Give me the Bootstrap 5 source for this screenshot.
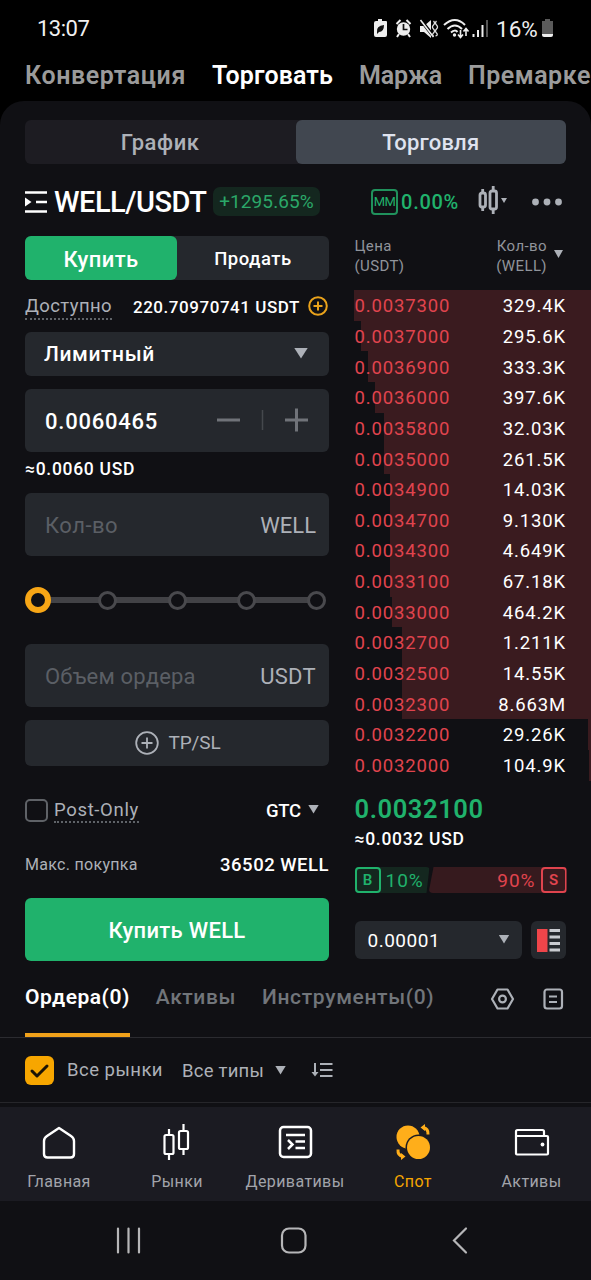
<!DOCTYPE html>
<html lang="ru">
<head>
  <meta charset="UTF-8"/>
  <meta name="viewport" content="width=device-width, initial-scale=1.0"/>
  <title>WELL/USDT</title>
  <link href="https://cdn.jsdelivr.net/npm/bootstrap@5.3.0/dist/css/bootstrap.min.css" rel="stylesheet"/>
  <style>
    body {
      background: #000;
      color: #fff;
      font-family: Roboto, "Noto Sans", sans-serif;
      font-size: 18.5px;
      line-height: 1.2;
      overflow: hidden;
    }
    svg { display: block; flex: none; }
    .app { width: 591px; height: 1280px; overflow: hidden; white-space: nowrap; }
    .c-grey { color: #adb1b8; }
    .c-mute { color: #71757a; }
    .c-dark { color: #5b5f65; }
    .c-green { color: #20b26c; }
    .c-red { color: #e0444e; }
    .dotted { border-bottom: 2px dotted #5f6368; }
    .caret { width: 12px; height: 9px; background: #adb1b8; clip-path: polygon(0 0, 100% 0, 50% 100%); flex: none; }

    /* top bars */
    .statusbar { height: 57px; padding: 2px 37px 0; font-size: 22px; letter-spacing: -.5px; color: #f0f0f0; }
    .top-tabs { height: 44px; padding: 0 0 6px 25px; font-size: 25px; font-weight: 600; color: #9b9b9b; gap: 26px; }
    .panel { height: 1006px; background: #101014; border-radius: 24px 24px 0 0; }
    .switch { height: 44px; margin: 0 25px; background: #1d1c22; border-radius: 6px; font-size: 22px; font-weight: 500; }
    .switch .on { background: #414750; border-radius: 6px; color: #dfe3ef; }
    .switch .w-50 { padding-top: 3px; }
    .pair-row { height: 72px; padding: 3px 25px 0; }
    .pair-name { font-size: 29px; font-weight: 500; letter-spacing: -.5px; margin-left: 7px; padding-top: 2px; width: 159px; }
    .pct { width: 107px; height: 29px; padding-top: 2px; border-radius: 7px; background: #14271f; color: #2ba869; font-size: 19px; letter-spacing: .1px; }
    .mm { width: 27px; height: 26px; border: 2px solid #20915c; border-radius: 4px; font-size: 13px; letter-spacing: -.4px; }

    /* order form */
    .form-side { width: 304px; margin-left: 25px; }
    .field { background: #25282d; border-radius: 6px; }
    .btn-buy, .btn-buy:hover { background: #20b26c; color: #fff; border-radius: 6px; }
    .h63 { height: 63px; font-size: 22px; padding: 3px 13px 0 20px; }
    .track { height: 26px; margin: 31px 0; position: relative; }
    .track::before { content: ""; position: absolute; left: 20px; right: 12px; top: 10px; height: 6px; background: #424246; }
    .track i { position: relative; width: 19px; height: 19px; border: 3px solid #49494d; border-radius: 50%; background: #101014; }
    .track i:first-child { width: 26px; height: 26px; border: 6px solid #f7a616; }
    .box { width: 23px; height: 23px; border: 2px solid #5f6267; border-radius: 5px; }

    /* order book */
    .book-side { width: 236.500px; }
    .book-head { height: 54px; font-size: 15px; line-height: 20px; letter-spacing: .4px; color: #90949b; padding-right: 28px; }
    .book-row { height: 30.67px; padding: 2px 25px 0 0; position: relative; letter-spacing: .85px; }
    .book-row div { position: absolute; top: 0; bottom: 0; right: 0; background: #3a1b1f; }
    .book-row span { position: relative; }
    .power { width: 212px; height: 26px; font-size: 19px; }
    .power-buy { width: 75px; background: #14271f; clip-path: polygon(0 0, 100% 0, 72px 100%, 0 100%); border-radius: 4px; }
    .power-sell { width: 138px; margin-left: -1px; background: #361a1e; clip-path: polygon(5px 0, 100% 0, 100% 100%, 0 100%); border-radius: 4px; }
    .tag { width: 26px; height: 26px; border: 2px solid; border-radius: 4px; font-size: 15px; font-weight: 600; }

    /* orders */
    .order-tabs { height: 77px; border-bottom: 1px solid #2b2b30; padding: 0 25px; font-size: 21px; font-weight: 500; letter-spacing: .6px; }
    .order-tabs .on { font-weight: 600; letter-spacing: .5px; border-bottom: 4px solid #f0a11a; }
    .order-tabs .tab-text { height: 76px; padding-top: 24px; }
    .filters { height: 65px; border-bottom: 1px solid #26262a; padding: 0 25px; }
    .tick { width: 29px; height: 29px; border-radius: 6px; background: #f7a600; }

    .bottom-nav { height: 94px; background: #1b1b22; font-size: 16px; letter-spacing: .4px; color: #a2a4ab; }
    .bottom-nav .ico { height: 36px; margin: 17px auto 12px; }
    .sysnav { height: 79px; background: #101014; }
  </style>
</head>
<body>
<div class="app">
  <!-- Phone status bar -->
  <div class="statusbar d-flex align-items-center">
    <span class="me-auto">13:07</span>
    <svg width="181" height="24" viewBox="0 0 181 24" fill="#eee" style="margin-top:-4px">
      <path d="M4 3h4v2h4q1 0 1 1v13q0 2-2 2H2q-2 0-2-2V7q0-2 2-2h2z" transform="translate(1 0)"/>
      <path d="M4 16q-1-6 7-7 0 7-5 7l-2 2z" fill="#111"/>
      <circle cx="30.500" cy="13" r="6.700"/><path d="M23.500 8l4-4M37.500 8l-4-4M26 18l-2 3M35 18l2 3" stroke="#eee" stroke-width="2"/>
      <path d="M30.500 8v5.500h4" fill="none" stroke="#111" stroke-width="1.700"/>
      <path d="M47 10h4l7-6v18l-7-6h-4z"/><path d="M47 3l14 18" stroke="#000" stroke-width="3.500"/><path d="M47.500 4l13 17" stroke="#eee" stroke-width="1.600"/>
      <path d="M60.500 5q2 2 0 4t0 4 0 4 0 3M63.500 5q-2 2 0 4t0 4 0 4-1 3" fill="none" stroke="#ddd" stroke-width="1.300"/>
      <g fill="none" stroke="#eee" stroke-width="2"><path d="M71 9q11-10 21 0M74.500 13q7.500-7 14.500 0M78 16.500q4-3.500 6.500-.5"/></g>
      <circle cx="81.500" cy="19" r="1.700"/>
      <path d="M87.500 14v7M85 18.500l2.500 3 2.500-3M93 20v-7M90.500 15.500l2.500-3 2.500 3" fill="none" stroke="#eee" stroke-width="1.600"/>
      <path d="M99.500 18h2v3h-2zM104 14h2v7h-2zM108.500 9h2v12h-2z"/><path d="M113 4h2v17h-2z" fill="#555"/>
      <text x="123" y="20.500" font-size="22.500" letter-spacing="0">16%</text>
      <path d="M172 3h5v2h3v14h-11V5h3z" fill="#5a5a5a"/><path d="M169 18h11v1q0 2-2 2h-7q-2 0-2-2z"/>
    </svg>
  </div>

  <div class="top-tabs d-flex align-items-center">
    <span style="letter-spacing:.62px">Конвертация</span>
    <span class="text-white" style="letter-spacing:.12px">Торговать</span>
    <span style="letter-spacing:-.1px">Маржа</span>
    <span style="letter-spacing:.5px">Премарке</span>
  </div>

  <div class="panel">
    <div style="height:19px"></div>
    <div class="switch d-flex">
      <div class="w-50 d-flex align-items-center justify-content-center c-grey" style="letter-spacing:.6px">График</div>
      <div class="on w-50 d-flex align-items-center justify-content-center" style="letter-spacing:.2px">Торговля</div>
    </div>

    <!-- Pair header -->
    <div class="pair-row d-flex align-items-center">
      <svg width="22" height="22" viewBox="0 0 22 22"><path d="M0 1.500h22M11 11h11M0 20.500h22" stroke="#fff" stroke-width="2.600"/><path d="M0 6.500l6.500 4.500-6.500 4.500z" fill="#fff"/></svg>
      <span class="pair-name">WELL/USDT</span>
      <span class="pct d-flex align-items-center justify-content-center">+1295.65%</span>
      <span class="mm c-green d-flex align-items-center justify-content-center ms-auto">MM</span>
      <span class="c-green" style="font-size:20px;font-weight:500;letter-spacing:.7px;margin-left:3px;padding-top:1px">0.00%</span>
      <svg width="30" height="30" viewBox="0 0 30 30" style="margin:-4px 24px 0 19px" fill="none" stroke="#adb1b8" stroke-width="2.800">
        <rect x="2" y="8" width="5.500" height="14" rx="2"/><path d="M4.700 4v4M4.700 22v4"/>
        <rect x="12" y="6" width="6.500" height="18" rx="2"/><path d="M15.200 1v5M15.200 24v5"/>
        <path d="M23 13h6l-3 5z" fill="#adb1b8" stroke="none"/>
      </svg>
      <svg width="34" height="8" viewBox="0 0 34 8" fill="#adb1b8"><circle cx="3.500" cy="4" r="3.400"/><circle cx="15" cy="4" r="3.400"/><circle cx="26.500" cy="4" r="3.400"/></svg>
    </div>

    <div class="d-flex" style="height:725px">
      <!-- Order form -->
      <div class="form-side">
        <div class="field d-flex" style="height:44px">
          <div class="btn-buy w-50 d-flex align-items-center justify-content-center" style="font-size:22px;font-weight:500;letter-spacing:.38px;padding-top:4px">Купить</div>
          <div class="w-50 d-flex align-items-center justify-content-center" style="font-size:18.5px;font-weight:500;letter-spacing:.5px;padding-top:2px">Продать</div>
        </div>
        <div class="d-flex align-items-center justify-content-between" style="height:52px;padding-top:2px">
          <span class="dotted c-grey" style="letter-spacing:.4px;margin-top:1px">Доступно</span>
          <span class="d-flex align-items-center" style="font-size:17px;font-weight:500;letter-spacing:.55px;gap:7px">220.70970741 USDT
            <svg width="22" height="22" viewBox="0 0 22 22" fill="none" stroke="#e9a21b" stroke-width="2" style="margin-top:-2px"><circle cx="11" cy="11" r="8.800"/><path d="M6.500 11h9M11 6.500v9"/></svg>
          </span>
        </div>
        <div class="field d-flex align-items-center justify-content-between" style="height:44px;padding:1px 21px 0 19px;font-size:21px;font-weight:500;letter-spacing:.6px">Лимитный
          <span class="caret" style="width:14px;height:11px;margin-top:-3px"></span>
        </div>
        <div class="field h63 d-flex align-items-center" style="margin-top:13px">
          <span class="me-auto" style="font-weight:500;letter-spacing:.76px">0.0060465</span>
          <svg width="92" height="26" viewBox="0 0 92 26" stroke="#707379" stroke-width="3" style="margin:-4px 7px 0 0"><path d="M0 13h23M68 13h23M79.500 1.500v23"/><path d="M45.500 3v20" stroke="#45484d" stroke-width="1.500"/></svg>
        </div>
        <div class="d-flex align-items-center" style="height:41px;padding-bottom:7px;font-size:17.5px;font-weight:500;letter-spacing:.7px">≈0.0060 USD</div>
        <div class="field h63 d-flex align-items-center justify-content-between">
          <span class="c-dark" style="letter-spacing:.5px">Кол-во</span><span class="c-grey" style="letter-spacing:0">WELL</span>
        </div>
        <div class="track d-flex align-items-center" style="gap:50.8px;padding-right:2px"><i></i><i style="margin-left:-4px"></i><i></i><i></i><i></i></div>
        <div class="field h63 d-flex align-items-center justify-content-between">
          <span class="c-dark" style="letter-spacing:.2px">Объем ордера</span><span class="c-grey" style="letter-spacing:.3px">USDT</span>
        </div>
        <div class="field c-grey d-flex align-items-center justify-content-center" style="height:46px;margin-top:13px;gap:9px;font-size:19px;letter-spacing:-.1px;padding-left:2px">
          <svg width="24" height="24" viewBox="0 0 24 24" fill="none" stroke="#adb1b8" stroke-width="1.800"><circle cx="12" cy="12" r="10.800"/><path d="M6.500 12h11M12 6.500v11"/></svg>TP/SL
        </div>
        <div class="d-flex align-items-center" style="height:88px">
          <span class="box"></span>
          <span class="dotted c-grey" style="margin-left:6px;padding-top:2px;letter-spacing:.66px">Post-Only</span>
          <span class="ms-auto" style="font-weight:500;letter-spacing:-.2px;padding-top:2px">GTC</span>
          <span class="caret" style="margin:-2px 10px 0 7px;width:11px"></span>
        </div>
        <div class="d-flex align-items-center justify-content-between" style="height:44px;padding-bottom:22px">
          <span class="c-grey" style="font-size:16px;letter-spacing:.3px">Макс. покупка</span><span style="font-weight:500;letter-spacing:.5px">36502 WELL</span>
        </div>
        <div class="btn-buy d-flex align-items-center justify-content-center" style="height:63px;font-size:22px;font-weight:500;letter-spacing:.3px;padding-top:3px">Купить WELL</div>
      </div>

      <!-- Order book -->
      <div class="book-side ms-auto">
        <div class="book-head d-flex justify-content-between">
          <div>Цена<br>(USDT)</div>
          <div class="d-flex align-items-start text-end"><span>Кол-во<br>(WELL)</span><span class="caret" style="width:9px;height:8px;margin:14px 0 0 7px"></span></div>
        </div>
        <div id="asks"></div>
        <div class="c-green" style="font-size:25.5px;font-weight:600;letter-spacing:.6px;margin-top:13px">0.0032100</div>
        <div style="font-size:17.5px;font-weight:500;letter-spacing:.7px;margin-top:5px">≈0.0032 USD</div>
        <div class="power d-flex" style="margin-top:17px">
          <div class="power-buy c-green d-flex align-items-center"><span class="tag d-flex align-items-center justify-content-center">B</span><span style="margin-left:5px;padding-top:2px;letter-spacing:1px">10%</span></div>
          <div class="power-sell c-red d-flex align-items-center justify-content-end"><span style="margin-right:5px;padding-top:2px;letter-spacing:1px">90%</span><span class="tag d-flex align-items-center justify-content-center">S</span></div>
        </div>
        <div class="d-flex" style="margin-top:28px;gap:9px">
          <div class="field d-flex align-items-center justify-content-between" style="width:167px;height:38px;padding:2px 12px 0 13px;font-size:19px;letter-spacing:.5px">0.00001<span class="caret" style="margin-top:-4px;width:11px"></span></div>
          <div class="field d-flex align-items-center justify-content-center" style="width:35px;height:38px">
            <svg width="23" height="23" viewBox="0 0 23 23"><path d="M0 0h10.500v23H0z" fill="#ef454a"/><path d="M12.500 1.500H23M12.500 8H23M12.500 14.500H23M12.500 21H23" stroke="#c9cbd0" stroke-width="3"/></svg>
          </div>
        </div>
      </div>
    </div>

    <!-- Orders -->
    <div class="order-tabs d-flex c-mute">
      <div class="tab-text on text-white">Ордера(0)</div>
      <div class="tab-text" style="margin-left:26px">Активы</div>
      <div class="tab-text me-auto" style="margin-left:26px;letter-spacing:.66px">Инструменты(0)</div>
      <svg width="76" height="24" viewBox="0 0 76 24" fill="none" stroke="#adb1b8" stroke-width="2.200" style="margin-top:26px">
        <path d="M7.500 2.500h10l5.500 9.500-5.500 9.500h-10L2 12z" stroke-linejoin="round"/><circle cx="12.500" cy="12" r="3.400"/>
        <rect x="54.500" y="2.500" width="17.500" height="19" rx="2.500"/><path d="M59 9.500h8M59 15h8"/>
      </svg>
    </div>
    <div class="filters d-flex align-items-center c-grey">
      <span class="tick"><svg width="29" height="29" viewBox="0 0 29 29" fill="none" stroke="#1c1405" stroke-width="3" stroke-linecap="round" stroke-linejoin="round"><path d="M7 15l5 5 10-10"/></svg></span>
      <span style="margin-left:13px;letter-spacing:.48px">Все рынки</span>
      <span style="margin-left:19px;letter-spacing:.22px;padding-top:2px">Все типы</span>
      <span class="caret" style="margin-left:11px;width:11px"></span>
      <svg width="23" height="16" viewBox="0 0 23 16" fill="none" stroke="#adb1b8" stroke-width="2" style="margin-left:25px"><path d="M4 1v11M9 2h12.500M9 8h12.500M9 14h12.500"/><path d="M.5 10h7L4 14.500z" fill="#adb1b8" stroke="none"/></svg>
    </div>
  </div>

  <!-- Bottom navigation -->
  <div class="bottom-nav d-flex text-center">
    <div style="width:118px"><svg class="ico" width="36" height="36" viewBox="0 0 36 36" fill="none" stroke="#fff" stroke-width="2.400" stroke-linejoin="round"><path d="M18 4l12 8q3 2 3 5V30q0 3.500-3.500 3.500h-23Q3 33.500 3 30V17q0-3 3-5z"/></svg>Главная</div>
    <div style="width:118px"><svg class="ico" width="36" height="36" viewBox="0 0 36 36" fill="none" stroke="#fff" stroke-width="2.200"><rect x="5.500" y="11" width="9" height="19" rx="1.500"/><path d="M10 5v6M10 30v6"/><rect x="20" y="7" width="9" height="18" rx="1.500"/><path d="M24.500 0v7M24.500 25v6"/></svg>Рынки</div>
    <div style="width:118px"><svg class="ico" width="36" height="36" viewBox="0 0 36 36" fill="none" stroke="#fff" stroke-width="2.500"><rect x="3" y="3" width="31" height="30" rx="3.500"/><path d="M9 11h19M18.500 17.500H28M18.500 24H28"/><path d="M11 16l4.500 4.500L11 25"/></svg>Деривативы</div>
    <div style="width:118px;color:#f7a600"><svg class="ico" width="36" height="36" viewBox="0 0 36 36" fill="#ffae1a">
      <circle cx="13" cy="13" r="11.500"/><circle cx="23.500" cy="23.500" r="13" fill="#1b1b22"/><circle cx="23.500" cy="23.500" r="11.500"/>
      <path d="M28 3.500q5.500 1 5 7M8 32.500q-5.500-1-5-7" fill="none" stroke="#ffae1a" stroke-width="3"/><path d="M30 0v7l-4.500-3.500zM6 36v-7l4.500 3.500z"/></svg>Спот</div>
    <div style="width:119px"><svg class="ico" width="36" height="36" viewBox="0 0 36 36" fill="none" stroke="#fff" stroke-width="2.200" stroke-linejoin="round"><rect x="2" y="12" width="32" height="18.500" rx="1"/><path d="M2 13V7.500Q2 6 3.500 6h25q1.500 0 1.500 1.500V12"/><circle cx="28.500" cy="20.500" r="1.900" fill="#fff" stroke="none"/></svg>Активы</div>
  </div>

  <!-- Android buttons -->
  <div class="sysnav">
    <svg width="591" height="79" viewBox="0 0 591 79" fill="none" stroke="#b6b6b8" stroke-width="2.200" stroke-linecap="round"><path d="M118 27.500v24M128.500 27.500v24M139 27.500v24"/><rect x="282" y="27.500" width="23.500" height="24" rx="7"/><path d="M466 27.500L454 39.500l12 12"/></svg>
  </div>
</div>

<script src="https://cdn.jsdelivr.net/npm/bootstrap@5.3.0/dist/js/bootstrap.bundle.min.js"></script>
<script>
  // price, amount, depth bar width in px
  const asks = [
    ["0.0037300", "329.4K", 237], ["0.0037000", "295.6K", 230], ["0.0036900", "333.3K", 223],
    ["0.0036000", "397.6K", 216], ["0.0035800", "32.03K", 207], ["0.0035000", "261.5K", 207],
    ["0.0034900", "14.03K", 201], ["0.0034700", "9.130K", 201], ["0.0034300", "4.649K", 201],
    ["0.0033100", "67.18K", 201], ["0.0033000", "464.2K", 199], ["0.0032700", "1.211K", 189],
    ["0.0032500", "14.55K", 189], ["0.0032300", "8.663M", 189], ["0.0032200", "29.26K", 3],
    ["0.0032000", "104.9K", 2]
  ];
  document.getElementById("asks").innerHTML = asks.map(([price, amount, w]) => `
    <div class="book-row d-flex align-items-center justify-content-between">
      <div style="width:${w}px"></div>
      <span class="c-red">${price}</span><span>${amount}</span>
    </div>`).join("");
</script>
</body>
</html>
